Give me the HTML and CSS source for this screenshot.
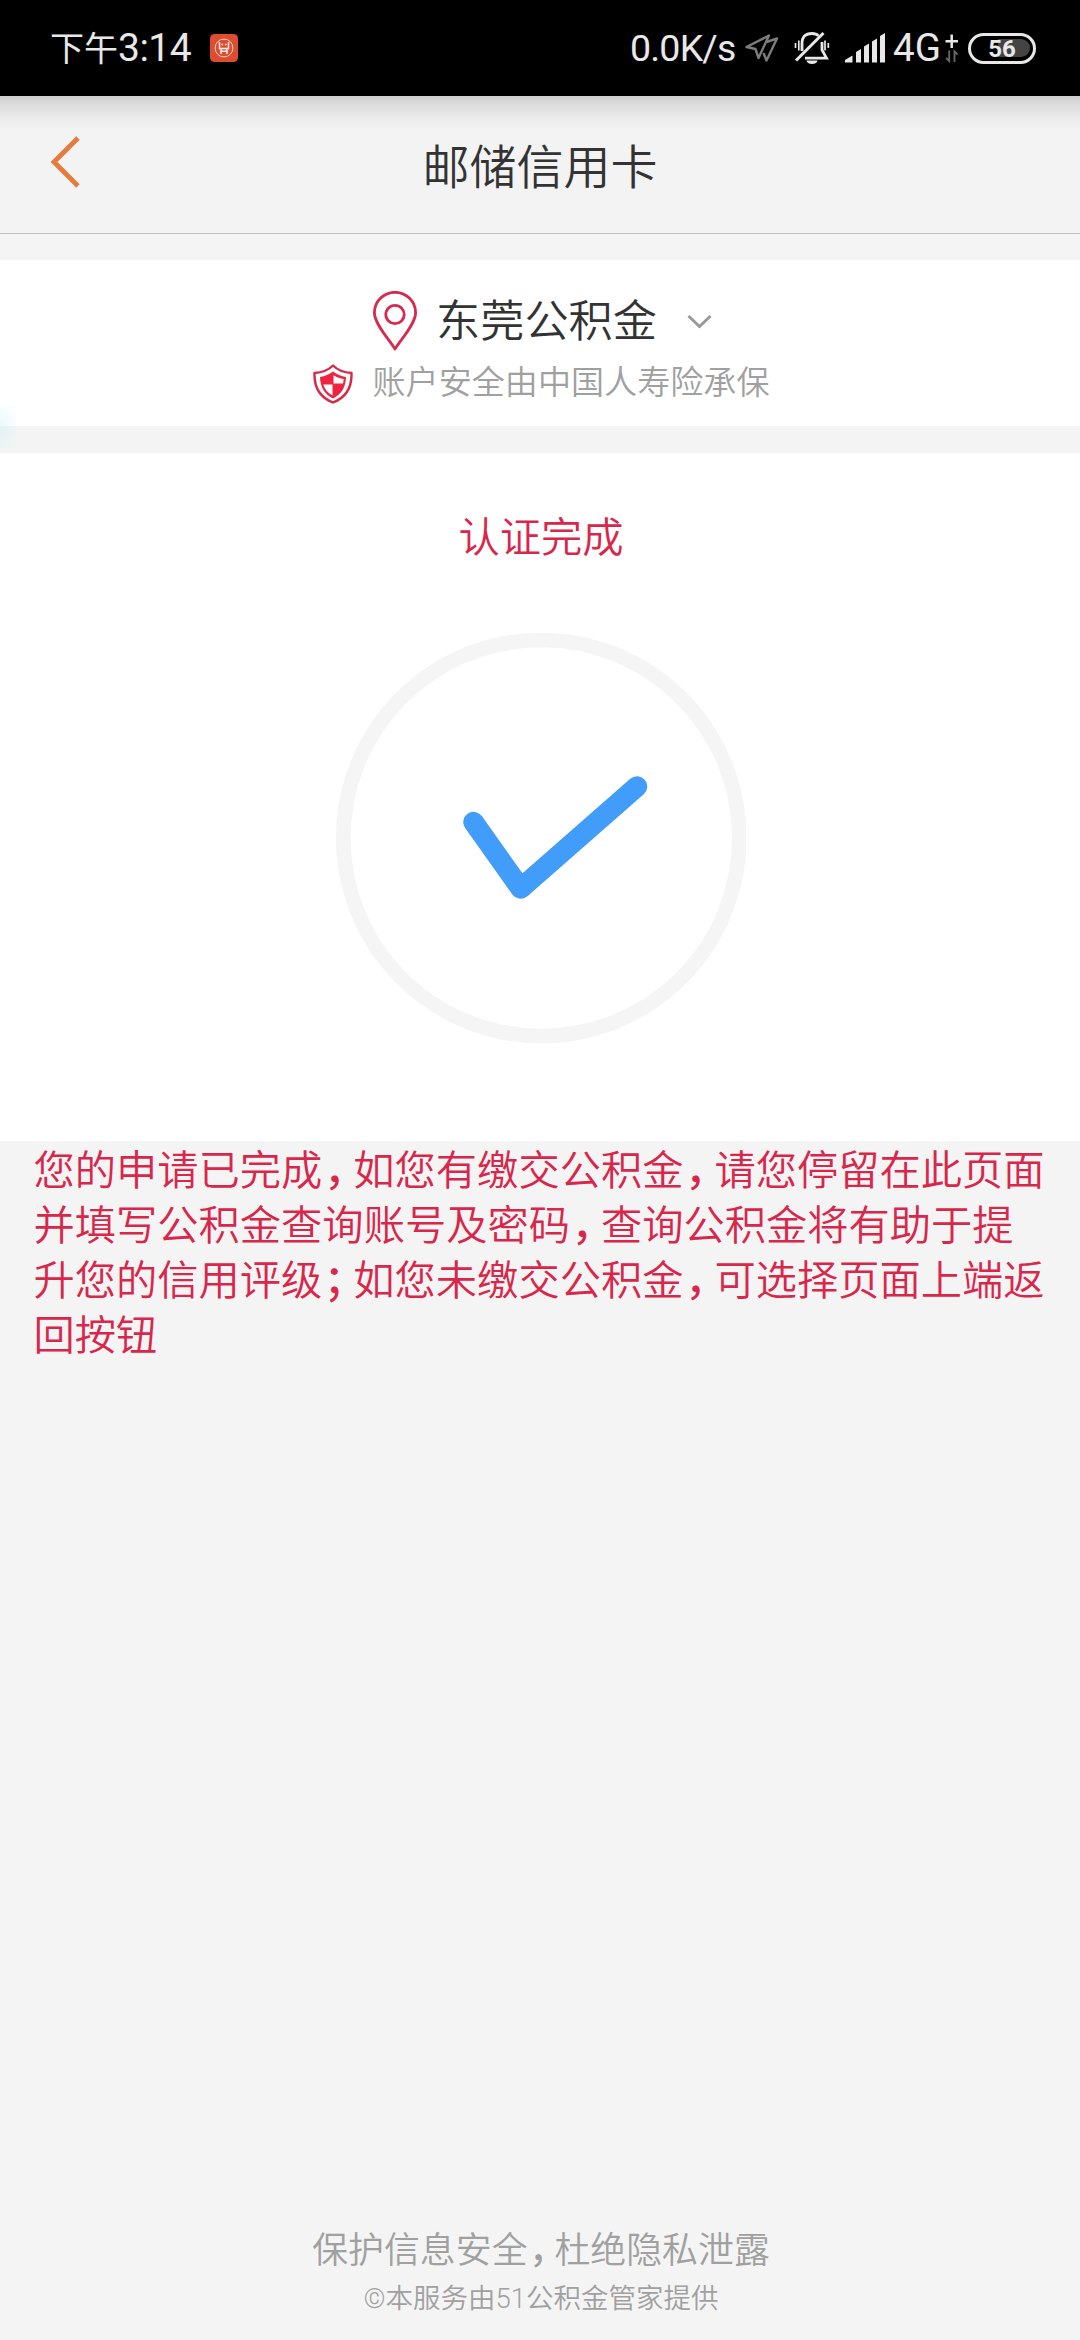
FILE: index.html
```html
<!DOCTYPE html>
<html lang="zh-CN">
<head>
<meta charset="utf-8">
<title>邮储信用卡</title>
<link rel="stylesheet" href="styles.css">
</head>
<body>
<div class="status">
  <div class="status-left">
    <span class="clock"><span class="clock-cn">下午</span>3:14</span>
    <svg class="app-icon" width="28" height="28" viewBox="0 0 28 28">
      <rect width="28" height="28" rx="4.5" fill="#dc4e2f"/>
      <circle cx="14" cy="14" r="8.900" fill="none" stroke="#f6d3c6" stroke-width="1"/>
      <path d="M9.500 8v6.500h9V8M11.500 10.500h1.500M15 10.500h1.500M11 14.500V20M17 14.500V20M11 17.300h6" fill="none" stroke="#fdeee8" stroke-width="1.500"/>
    </svg>
  </div>
  <div class="status-right">
    <span class="speed">0.0K/s</span>
    <svg class="nav-icon" width="34" height="30" viewBox="0 0 34 30" fill="none" stroke="#7c7c7c" stroke-width="2.400" stroke-linejoin="round">
      <path d="M1.500 14L24 2.500 13.500 25 10.500 16z"/>
      <path d="M21.500 9L32 5.500 21.500 27.500 18.500 20"/>
    </svg>
    <svg class="bell-icon" width="36" height="34" viewBox="0 0 36 34" fill="none" stroke="#e8e8e8" stroke-width="2.800">
      <path d="M8 20V13C8 5 12 2.500 18 2.500c3 0 5 .8 6.500 2.300M28 11v8l4.500 8.200H11"/>
      <path d="M2 29.500L29.500 2" stroke-width="3"/>
      <path d="M12.500 29.500h11a5.500 3.500 0 0 1-11 0z" fill="#e8e8e8" stroke="none"/>
      <path d="M1.500 12v5M4.800 9.500v10M31 9.500v10M34.300 12v5" stroke-width="1.700"/>
    </svg>
    <svg class="signal-icon" width="41" height="30" viewBox="0 0 41 30" fill="#e8e8e8">
      <path d="M0 29.500V27l7.500-4.500v7zM11 29.500V19l5-3v13.500zM19 29.500V13.500l5-3v19zM27 29.500V8.500l5-3v24zM35 29.500V3l5-3v29.500z"/>
    </svg>
    <span class="network">4G</span>
    <svg class="plus-icon" width="14" height="29" viewBox="0 0 14 29" fill="none">
      <path d="M.5 7.300h12.500M6.700.5V14" stroke="#e8e8e8" stroke-width="2.500"/>
      <path d="M4.200 16.500V27l-3-3M9.500 28V17.500l3 3" stroke="#666" stroke-width="1.900"/>
    </svg>
    <div class="battery"><span class="battery-level"></span><span class="battery-text">56</span></div>
  </div>
</div>

<header class="header">
  <svg class="back" width="30" height="54" viewBox="0 0 30 54">
    <path d="M28 3L4 27 28 51" fill="none" stroke="#e67b3e" stroke-width="4.800"/>
  </svg>
  <h1 class="title">邮储信用卡</h1>
</header>

<section class="location">
  <div class="city">
    <svg class="pin" width="44" height="60" viewBox="0 0 44 60" fill="none" stroke="#d62a4e" stroke-width="2.800">
      <path d="M22 58C17 49.500 1.400 33 1.400 21.700a20.600 20.400 0 0 1 41.200 0C42.600 33 27 49.500 22 58z" stroke-linejoin="round"/>
      <circle cx="22" cy="23.500" r="9.200"/>
    </svg>
    <span class="city-name">东莞公积金</span>
    <svg class="chevron" width="25" height="15" viewBox="0 0 25 15">
      <path d="M1.500 2l11 10.500 11-10.500" fill="none" stroke="#999" stroke-width="3"/>
    </svg>
  </div>
  <div class="insured">
    <svg class="shield" width="40" height="40" viewBox="0 0 40 40">
      <path d="M20 1.500C15.500 6 9 8.500 1.500 9 1 24 7 33.500 20 38.500 33 33.500 39 24 38.500 9 31 8.500 24.500 6 20 1.500z" fill="#fff" stroke="#d62a46" stroke-width="2.400" stroke-linejoin="round"/>
      <path d="M20 7.500C16 10.500 12 12.300 7 13c.3 10 4.500 17.500 13 21.500 8.500-4 12.700-11.500 13-21.500-5-.7-9-2.500-13-5.500z" fill="#ee2440"/>
      <path d="M20.500 11.200C24 13.300 27 14.400 30.700 15c-.1 1.500-.3 3-.7 4.500h-9.500zM19.500 20.500v11C14.500 28.800 11.700 25 10.200 20.500z" fill="#fff"/>
    </svg>
    <span>账户安全由中国人寿险承保</span>
  </div>
  <div class="edge-glow"></div>
</section>

<section class="result">
  <h2 class="result-title">认证完成</h2>
  <svg class="result-icon" width="412" height="412" viewBox="0 0 412 412" fill="none">
    <circle cx="207.300" cy="206" r="198" stroke="#f5f5f5" stroke-width="14.700"/>
    <path d="M139.500 190l47.200 66.500L303 154.500" stroke="#429cfa" stroke-width="20.500" stroke-linecap="round" stroke-linejoin="round"/>
  </svg>
</section>

<p class="notice">您的申请已完成<span class="punct">，</span>如您有缴交公积金<span class="punct">，</span>请您停留在此页面<br>并填写公积金查询账号及密码<span class="punct">，</span>查询公积金将有助于提<br>升您的信用评级<span class="punct">；</span>如您未缴交公积金<span class="punct">，</span>可选择页面上端返<br>回按钮</p>

<footer class="footer">
  <p class="slogan">保护信息安全<span class="punct">，</span>杜绝隐私泄露</p>
  <p class="provider">©本服务由51公积金管家提供</p>
</footer>
</body>
</html>
```

FILE: styles.css
```css
* {
  box-sizing: border-box;
}

body {
  margin: 0;
  width: 1080px;
  height: 2340px;
  display: flex;
  flex-direction: column;
  overflow: hidden;
  background: #f4f4f4;
  font-family: "Noto Sans CJK SC", sans-serif;
  font-weight: 350;
}

h1, h2, p {
  margin: 0;
  font-weight: 350;
}

svg {
  display: block;
  flex: none;
}

.status {
  flex: none;
  height: 96px;
  padding: 0 44px 0 50px;
  display: flex;
  justify-content: space-between;
  background: #000;
  color: #e8e8e8;
  font-family: Roboto, "Noto Sans CJK SC", sans-serif;
  font-weight: 400;
}

.status-left,
.status-right {
  display: flex;
  align-items: center;
}

.clock {
  width: 160px;
  font-size: 39px;
  line-height: 102px;
  letter-spacing: -0.5px;
  white-space: nowrap;
}

.clock-cn {
  font-size: 34px;
  letter-spacing: 0;
}

.speed {
  width: 115px;
  font-size: 37.5px;
  line-height: 102px;
  letter-spacing: -0.8px;
  white-space: nowrap;
}

.nav-icon {
  margin-right: 15px;
}

.bell-icon {
  margin-right: 15px;
}

.signal-icon {
  margin-right: 7px;
}

.network {
  width: 52px;
  font-size: 38.5px;
  line-height: 102px;
}

.plus-icon {
  margin-right: 9px;
}

.battery {
  width: 68px;
  height: 31px;
  display: grid;
  align-items: center;
  border: 3.5px solid #e8e8e8;
  border-radius: 16px;
}

.battery-level,
.battery-text {
  grid-area: 1 / 1;
}

.battery-level {
  justify-self: end;
  width: 32px;
  height: 18px;
  margin-right: 3px;
  border-radius: 0 9px 9px 0;
  background: #444;
}

.battery-text {
  padding-top: 1px;
  text-align: center;
  font-size: 24px;
  font-weight: 700;
  line-height: 24px;
}

.header {
  flex: none;
  height: 138px;
  padding: 0 50px;
  display: grid;
  grid-template-columns: 30px 1fr 30px;
  border-bottom: 1px solid #c2c2c2;
  background: linear-gradient(#cfcfcf 0, #dedede 10px, #ebebeb 22px, #f3f3f3 34px);
}

.back {
  margin-top: 39px;
}

.title {
  text-align: center;
  font-size: 47px;
  line-height: 135px;
  color: #333;
}

.location {
  flex: none;
  position: relative;
  height: 166px;
  margin: 26px 0 27px;
  padding-top: 26px;
  background: #fff;
}

.city {
  height: 65px;
  padding-left: 5px;
  display: flex;
  justify-content: center;
  align-items: center;
}

.pin {
  margin-top: 4px;
}

.city-name {
  margin: 0 30px 0 19px;
  font-size: 44.2px;
  line-height: 65px;
  color: #333;
}

.chevron {
  margin-top: 6px;
}

.insured {
  height: 58px;
  padding-left: 2px;
  display: flex;
  justify-content: center;
  align-items: center;
  gap: 20px;
  font-size: 33.1px;
  line-height: 58px;
  color: #a0a0a0;
}

.shield {
  margin-top: 7px;
}

.edge-glow {
  position: absolute;
  left: 0;
  top: 146px;
  width: 16px;
  height: 42px;
  background: radial-gradient(ellipse at left center, rgba(200, 240, 246, 0.4) 0, rgba(223, 246, 250, 0) 100%);
}

.result {
  flex: none;
  height: 688px;
  padding-top: 53px;
  display: flex;
  flex-direction: column;
  align-items: center;
  background: #fff;
}

.result-title {
  padding-left: 2px;
  font-size: 41.3px;
  line-height: 56px;
  color: #d8274b;
}

.result-icon {
  margin-top: 70px;
}

.notice {
  margin-top: -1px;
  padding-left: 33.5px;
  font-size: 41.28px;
  line-height: 55px;
  white-space: nowrap;
  color: #d8274b;
}

.punct {
  padding-left: 0.04em;
  letter-spacing: -0.29em;
  font-weight: 500;
}

.footer {
  margin-top: auto;
  padding: 0 0 19px 2px;
  text-align: center;
  color: #a0a0a0;
}

.slogan {
  font-size: 35.9px;
  line-height: 60px;
}

.provider {
  font-family: Roboto, "Noto Sans CJK SC", sans-serif;
  font-size: 27.5px;
  line-height: 44px;
}
```
